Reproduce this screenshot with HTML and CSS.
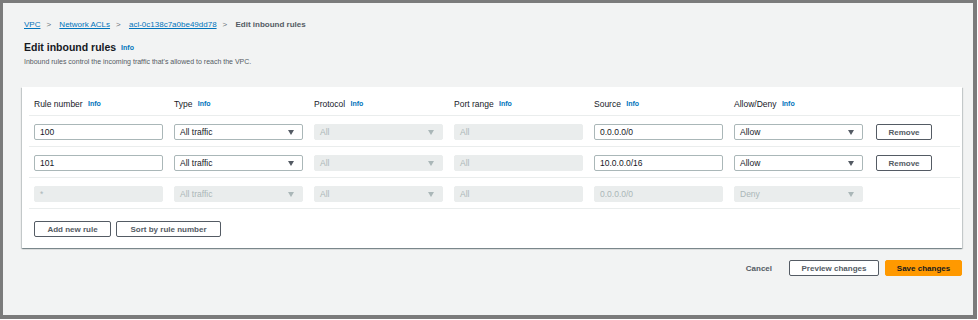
FILE: index.html
```html
<!DOCTYPE html>
<html lang="en">
<head>
    <meta charset="UTF-8">
    <title>Edit inbound rules</title>
    <link rel="stylesheet" href="styles.css">
</head>
<body>
    <div class="frame">
        <!-- breadcrumb -->
        <nav class="crumbs">
            <a href="#">VPC</a><span class="sep">&gt;</span>
            <a href="#">Network ACLs</a><span class="sep">&gt;</span>
            <a href="#">acl-0c138c7a0be49dd78</a><span class="sep">&gt;</span>
            <span class="current">Edit inbound rules</span>
        </nav>

        <div class="page-head">
            <h1>Edit inbound rules <span class="info">Info</span></h1>
            <p class="desc">Inbound rules control the incoming traffic that's allowed to reach the VPC.</p>
        </div>

        <div class="card">
            <div class="row head">
                <div class="label">Rule number <span class="info">Info</span></div>
                <div class="label">Type <span class="info">Info</span></div>
                <div class="label">Protocol <span class="info">Info</span></div>
                <div class="label">Port range <span class="info">Info</span></div>
                <div class="label">Source <span class="info">Info</span></div>
                <div class="label">Allow/Deny <span class="info">Info</span></div>
            </div>

            <div class="row">
                <div class="field">100</div>
                <div class="field select">All traffic<span class="caret"></span></div>
                <div class="field off select">All<span class="caret"></span></div>
                <div class="field off">All</div>
                <div class="field">0.0.0.0/0</div>
                <div class="field select">Allow<span class="caret"></span></div>
                <div><button class="btn remove">Remove</button></div>
            </div>

            <div class="row">
                <div class="field">101</div>
                <div class="field select">All traffic<span class="caret"></span></div>
                <div class="field off select">All<span class="caret"></span></div>
                <div class="field off">All</div>
                <div class="field">10.0.0.0/16</div>
                <div class="field select">Allow<span class="caret"></span></div>
                <div><button class="btn remove">Remove</button></div>
            </div>

            <div class="row">
                <div class="field off">*</div>
                <div class="field off select">All traffic<span class="caret"></span></div>
                <div class="field off select">All<span class="caret"></span></div>
                <div class="field off">All</div>
                <div class="field off">0.0.0.0/0</div>
                <div class="field off select">Deny<span class="caret"></span></div>
                <div></div>
            </div>

            <div class="card-actions">
                <button class="btn add">Add new rule</button>
                <button class="btn sort">Sort by rule number</button>
            </div>
        </div>

        <div class="footer">
            <button class="link-btn">Cancel</button>
            <button class="btn preview">Preview changes</button>
            <button class="btn primary">Save changes</button>
        </div>
    </div>
</body>
</html>
```

FILE: styles.css
```css
* {
    margin: 0;
    padding: 0;
    box-sizing: border-box;
}

body {
    background: #fff;
    font-family: 'Liberation Sans', Arial, sans-serif;
    color: #16191f;
}

.frame {
    width: 977px;
    height: 319px;
    border: 3px solid #7b7b7b;
    border-right-width: 4px;
    border-bottom-width: 4px;
    background: #f2f3f3;
    padding: 0 11px 0 19px;
}

.crumbs {
    margin: 17px 0 0 2px;
    font-size: 8px;
    line-height: 10px;
    color: #545b64;
}

.crumbs a {
    color: #0073bb;
    text-decoration: underline;
}

.sep {
    margin: 0 6px;
    color: #687078;
}

.current {
    font-weight: bold;
    color: #545b64;
}

.page-head {
    margin: 11px 0 0 2px;
}

h1 {
    font-size: 10.5px;
    line-height: 12px;
    font-weight: bold;
}

.info {
    font-size: 7px;
    font-weight: bold;
    color: #0073bb;
    margin-left: 3px;
    vertical-align: 1px;
}

h1 .info {
    margin-left: 2px;
}

.desc {
    font-size: 7px;
    line-height: 9px;
    color: #545b64;
    margin-top: 3px;
}

.card {
    margin-top: 21px;
    background: #fff;
    padding: 0 2px 0 7px;
    box-shadow: 0 1px 1px rgba(0,28,36,0.3), 1px 1px 1px rgba(0,28,36,0.15), -1px 1px 1px rgba(0,28,36,0.15);
}

.row {
    display: grid;
    grid-template-columns: repeat(6, 140px) 1fr;
    padding: 8px 0 6px 5px;
    border-bottom: 1px solid #eaeded;
}

.row.head {
    padding: 13px 0 7px 5px;
}

.label {
    font-size: 8.5px;
    line-height: 8px;
}

.field {
    width: 129px;
    height: 16px;
    border: 1px solid #aab7b8;
    border-radius: 2px;
    font-size: 8.5px;
    line-height: 14px;
    padding: 0 5px;
    color: #16191f;
    position: relative;
    background: #fff;
}

.field.off {
    border-color: #eaeded;
    background: #eaeded;
    color: #aab7b8;
}

.caret {
    position: absolute;
    right: 8px;
    top: 5px;
    border-left: 3.5px solid transparent;
    border-right: 3.5px solid transparent;
    border-top: 5px solid #545b64;
}

.off .caret {
    border-top-color: #aab7b8;
}

.btn {
    display: block;
    height: 16px;
    background: #fff;
    border: 1px solid #545b64;
    border-radius: 2px;
    font-family: inherit;
    font-size: 8px;
    font-weight: bold;
    color: #545b64;
    padding: 0;
}

.remove {
    width: 56px;
    margin-left: 2px;
}

.card-actions {
    display: flex;
    gap: 5px;
    padding: 12px 0 11px 5px;
}

.add {
    width: 77px;
}

.sort {
    width: 105px;
}

.footer {
    display: flex;
    justify-content: flex-end;
    align-items: center;
    gap: 6px;
    margin-top: 12px;
}

.link-btn {
    background: none;
    border: none;
    font-family: inherit;
    font-size: 8px;
    font-weight: bold;
    color: #545b64;
    margin-right: 11px;
}

.preview {
    width: 90px;
}

.primary {
    width: 77px;
    background: #ff9900;
    border-color: #ff9900;
    color: #16191f;
}
```
